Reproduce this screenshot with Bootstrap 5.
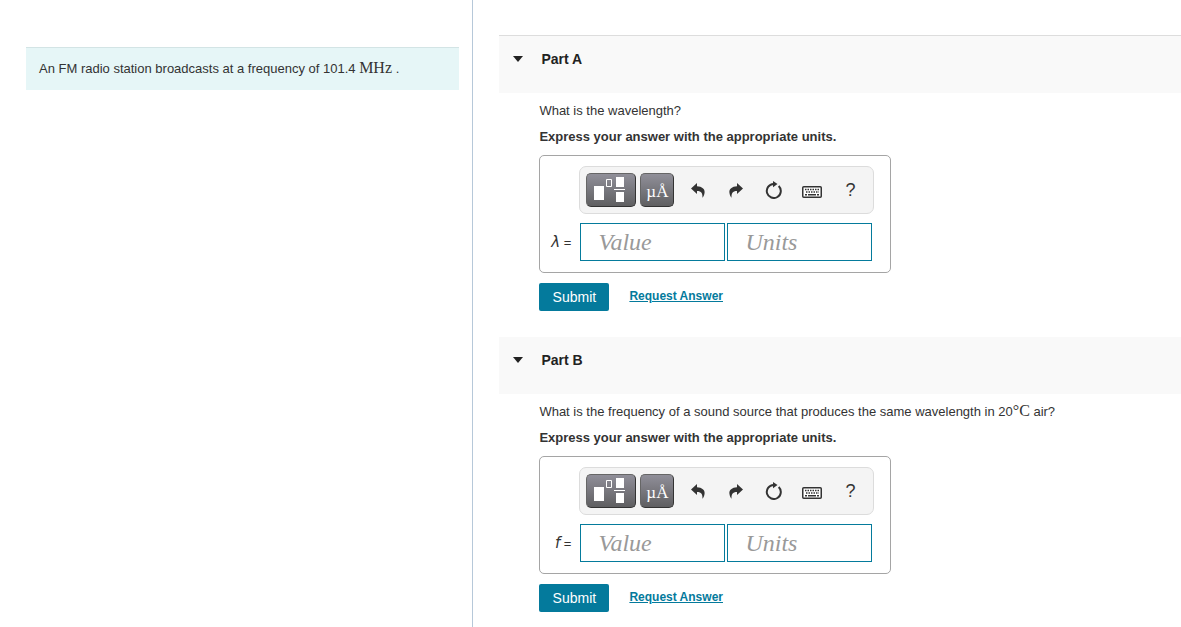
<!DOCTYPE html>
<html lang="en">
<head>
<meta charset="utf-8">
<meta name="viewport" content="width=device-width, initial-scale=1">
<title>FM radio wavelength</title>
<link href="https://cdn.jsdelivr.net/npm/bootstrap@5.3.0/dist/css/bootstrap.min.css" rel="stylesheet">
<style>
  body { font-family: "Liberation Sans", Arial, sans-serif; font-size: 13px; line-height: 20px; color: #333; background: #fff; }
  .problem-pane { flex: 0 0 40%; padding: 47px 13px 0 26px; }
  .problem-intro { background: #e6f6f7; border-top: 1px solid #d3e4e5; padding: 11px 13px; }
  .answer-pane { border-left: 1px solid #b6c8d9; padding: 35px 0 0 26px; min-width: 0; }
  .unit { font-family: "Liberation Serif", "Times New Roman", serif; font-size: 16px; line-height: 1; }
  .part { border-top: 1px solid transparent; padding-bottom: 25px; }
  .part:first-child { border-top-color: #ddd; }
  .part-header { background: #f9f9f9; height: 57px; padding: 13px 14px; }
  .part-toggle { font-size: 14px; font-weight: bold; color: #222; gap: 18px; line-height: 20px; }
  .part-body { padding: 8px 16px 0 40px; }
  .instruction { margin: 6px 0 8px; }
  .answer-box { width: 352px; max-width: 100%; border: 1px solid #a5a5a5; border-radius: 5px; padding: 10px 16px 11px 8px; }
  .toolbar { margin-left: 31px; background: #f4f4f4; border: 1px solid #dcdcdc; border-radius: 7px; padding: 6px 4px 6px 6px; }
  .palette { height: 34px; flex: none; border: 1px solid #333; border-top-color: #666; border-left-color: #666; border-radius: 5px; background: linear-gradient(#908f99, #5f5f61); color: #fff; }
  .palette-wide { width: 50px; margin-right: 4px; }
  .palette-units { width: 34px; margin-right: 5px; padding: 4px 0 0; font: 17px/28px "Liberation Serif", serif; }
  .tool { width: 38px; height: 34px; flex: none; color: #333; }
  .tool-help { font: 18px/34px "Liberation Sans", Arial, sans-serif; }
  .answer-row { margin-top: 9px; gap: 2px; }
  .answer-label { width: 30px; padding-right: 7px; white-space: nowrap; text-align: right; }
  .answer-label i { font: italic 15px/20px "DejaVu Sans", sans-serif; }
  .answer-field { width: 145px; height: 38px; min-width: 0; border: 1px solid #047b9c; border-radius: 0; padding: 0 17px; font: italic 24px/36px "Liberation Serif", "Times New Roman", serif; }
  .answer-field::placeholder { color: #999; opacity: 1; }
  .actions { margin-top: 10px; gap: 20px; }
  .btn-submit { width: 70px; height: 28px; background: #047a9c; border-radius: 2px; color: #fff; font-size: 14px; line-height: 28px; }
  .btn-submit:hover { background: #03617c; color: #fff; }
  .request-link { color: #047a9c; font-size: 12px; font-weight: bold; line-height: 26px; }
</style>
</head>
<body>
<svg class="d-none" aria-hidden="true">
  <symbol id="caret" viewBox="0 0 10 6"><path fill="currentColor" d="M0 0h10L5 6z"/></symbol>
  <symbol id="templates" viewBox="0 0 48 32">
    <path fill="#fff" d="M7 12h10v14H7zM29 3h8v10h-8zM27 15h11v1H27zM29 18h8v10h-8z"/>
    <path fill="none" stroke="#fff" d="M19.500 5.500h5v7h-5z"/>
  </symbol>
  <symbol id="undo" viewBox="0 0 14 15"><path fill="currentColor" d="M0 5.500 6 0v3.200C11 3.400 14 6 13.600 9.500c-.2 2.300-1 4-2.200 5.200C11.800 10.500 10.500 8 6 8v3z"/></symbol>
  <symbol id="reset" viewBox="0 0 18 18">
    <path fill="none" stroke="currentColor" stroke-width="2" d="M13.700 5a7 7 0 1 1-5.200-2"/>
    <path fill="currentColor" d="m8 0 4.500 3L8 6.300z"/>
  </symbol>
  <symbol id="keyboard" viewBox="0 0 20 12">
    <rect x=".75" y=".75" width="18.500" height="10.500" rx="1" fill="#fff" stroke="currentColor" stroke-width="1.500"/>
    <path fill="none" stroke="currentColor" stroke-width="1.300" stroke-dasharray="1.500 1" d="M3 3.500h14M4 6h13"/>
    <path fill="none" stroke="currentColor" stroke-width="1.500" d="M3 8.700h2M6 8.700h8M15 8.700h2"/>
  </symbol>
</svg>

<div class="d-flex min-vh-100">
  <aside class="problem-pane">
    <div class="problem-intro">An FM radio station broadcasts at a frequency of 101.4 <span class="unit">MHz</span> .</div>
  </aside>
  <main class="answer-pane flex-grow-1">
    <section class="part">
      <header class="part-header">
        <button type="button" class="part-toggle btn p-0 border-0 d-flex align-items-center" aria-expanded="true"><svg width="10" height="6"><use href="#caret"/></svg>Part A</button>
      </header>
      <div class="part-body">
        <p class="mb-0">What is the wavelength?</p>
        <p class="instruction fw-bold">Express your answer with the appropriate units.</p>
        <div class="answer-box">
          <div class="toolbar d-flex">
            <button type="button" class="palette palette-wide p-0" aria-label="Templates"><svg class="d-block" width="48" height="32"><use href="#templates"/></svg></button>
            <button type="button" class="palette palette-units" aria-label="Units">µÅ</button>
            <button type="button" class="tool btn p-0 border-0 d-flex align-items-center justify-content-center" aria-label="Undo"><svg width="14" height="15"><use href="#undo"/></svg></button>
            <button type="button" class="tool btn p-0 border-0 d-flex align-items-center justify-content-center" aria-label="Redo"><svg width="14" height="15"><use href="#undo" transform="matrix(-1 0 0 1 14 0)"/></svg></button>
            <button type="button" class="tool btn p-0 border-0 d-flex align-items-center justify-content-center" aria-label="Reset"><svg width="18" height="18"><use href="#reset"/></svg></button>
            <button type="button" class="tool btn p-0 pt-1 border-0 d-flex align-items-center justify-content-center" aria-label="Keyboard shortcuts"><svg width="20" height="12"><use href="#keyboard"/></svg></button>
            <button type="button" class="tool tool-help btn p-0 border-0" aria-label="Help">?</button>
          </div>
          <div class="answer-row d-flex align-items-center">
            <label class="answer-label" for="value-a"><i>λ</i> =</label>
            <input class="answer-field" id="value-a" type="text" placeholder="Value">
            <input class="answer-field" type="text" placeholder="Units" aria-label="Units, Part A">
          </div>
        </div>
        <div class="actions d-flex">
          <button type="submit" class="btn btn-submit p-0 border-0">Submit</button>
          <a class="request-link" href="#">Request Answer</a>
        </div>
      </div>
    </section>
    <section class="part">
      <header class="part-header">
        <button type="button" class="part-toggle btn p-0 border-0 d-flex align-items-center" aria-expanded="true"><svg width="10" height="6"><use href="#caret"/></svg>Part B</button>
      </header>
      <div class="part-body">
        <p class="mb-0">What is the frequency of a sound source that produces the same wavelength in 20<span class="unit">°C</span> air?</p>
        <p class="instruction fw-bold">Express your answer with the appropriate units.</p>
        <div class="answer-box">
          <div class="toolbar d-flex">
            <button type="button" class="palette palette-wide p-0" aria-label="Templates"><svg class="d-block" width="48" height="32"><use href="#templates"/></svg></button>
            <button type="button" class="palette palette-units" aria-label="Units">µÅ</button>
            <button type="button" class="tool btn p-0 border-0 d-flex align-items-center justify-content-center" aria-label="Undo"><svg width="14" height="15"><use href="#undo"/></svg></button>
            <button type="button" class="tool btn p-0 border-0 d-flex align-items-center justify-content-center" aria-label="Redo"><svg width="14" height="15"><use href="#undo" transform="matrix(-1 0 0 1 14 0)"/></svg></button>
            <button type="button" class="tool btn p-0 border-0 d-flex align-items-center justify-content-center" aria-label="Reset"><svg width="18" height="18"><use href="#reset"/></svg></button>
            <button type="button" class="tool btn p-0 pt-1 border-0 d-flex align-items-center justify-content-center" aria-label="Keyboard shortcuts"><svg width="20" height="12"><use href="#keyboard"/></svg></button>
            <button type="button" class="tool tool-help btn p-0 border-0" aria-label="Help">?</button>
          </div>
          <div class="answer-row d-flex align-items-center">
            <label class="answer-label" for="value-b"><i>f</i> =</label>
            <input class="answer-field" id="value-b" type="text" placeholder="Value">
            <input class="answer-field" type="text" placeholder="Units" aria-label="Units, Part B">
          </div>
        </div>
        <div class="actions d-flex">
          <button type="submit" class="btn btn-submit p-0 border-0">Submit</button>
          <a class="request-link" href="#">Request Answer</a>
        </div>
      </div>
    </section>
  </main>
</div>
<script src="https://cdn.jsdelivr.net/npm/bootstrap@5.3.0/dist/js/bootstrap.bundle.min.js"></script>
</body>
</html>
